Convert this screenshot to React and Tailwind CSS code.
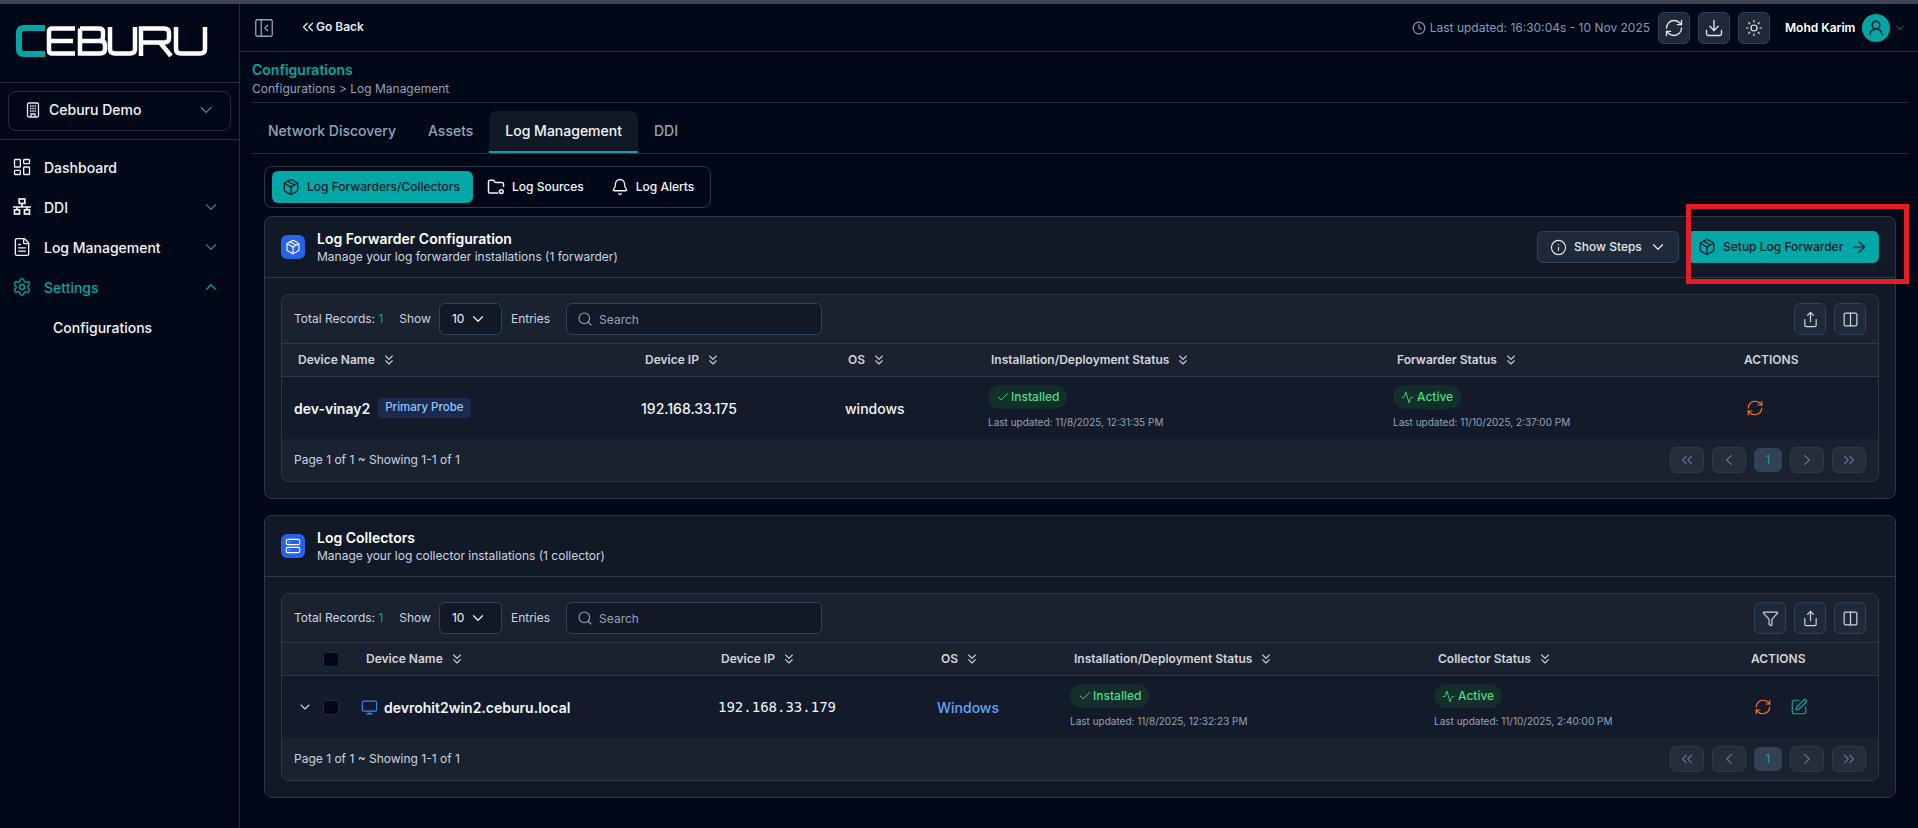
import {
  Activity, ArrowRight, Bell, Check, ChevronDown, ChevronLeft, ChevronRight, ChevronUp, ChevronsDown, ChevronsLeft,
  ChevronsRight, Clock, Columns2, FileText, Filter, Info, LayoutDashboard, Monitor, Package,
  PanelLeftClose, RefreshCw, Search, Server, Settings, Share, SquarePen, Sun, UserRound, Download,
} from 'lucide-react';

function Logo() {
  return (
    <svg width="192" height="32" viewBox="0 0 192 32" fill="none" strokeWidth="4.500">
      <path d="M29 3H8Q3 3 3 8V24Q3 29 8 29H29" stroke="#06a5a3" strokeWidth="6" />
      <g stroke="#fff">
        <path d="M59 3.500H36Q33 3.500 33 7V25Q33 28.500 36 28.500H59M33 16H57" />
        <path d="M64 3.500V28.500H84Q89 28.500 89 24V20Q89 16 84 16H66M64 3.500H83Q87 3.500 87 7V12Q87 16 83 16" />
        <path d="M94 2V24Q94 28.500 99 28.500H114Q119 28.500 119 24V2" />
        <path d="M125 31V3.500H148Q153 3.500 153 8V13Q153 17.500 148 17.500H127M144 17.500L155 31" />
        <path d="M160 2V24Q160 28.500 165 28.500H184Q189 28.500 189 24V2" />
      </g>
    </svg>
  );
}

function BuildingIcon() {
  return (
    <svg width="14" height="16" viewBox="0 0 14 16" fill="none" stroke="#e2e8f0">
      <rect x="1.500" y="1" width="11" height="14" rx="1.500" strokeWidth="1.300" />
      <path d="M4 4h1.500M6.300 4h1.500M8.600 4h1.500M4 6.500h1.500M6.300 6.500h1.500M8.600 6.500h1.500M4 9h1.500M6.300 9h1.500M8.600 9h1.500" strokeWidth="1.300" />
      <path d="M5 15v-3h4v3" strokeWidth="1.300" />
    </svg>
  );
}

function DdiIcon({ size = 20 }) {
  return (
    <svg width={size} height={size} viewBox="0 0 20 20" fill="none" stroke="currentColor" strokeWidth="1.700">
      <rect x="7.200" y="2" width="5.600" height="4.400" />
      <path d="M10 6.400V10M1 10h18M5 10v2.500M15 10v2.500" />
      <rect x="2.500" y="12.800" width="5" height="4.200" />
      <rect x="12.500" y="12.800" width="5" height="4.200" />
    </svg>
  );
}

function FolderDotIcon({ size = 18 }) {
  return (
    <svg width={size} height={size} viewBox="0 0 24 24" fill="none" stroke="currentColor" strokeWidth="2" strokeLinecap="round" strokeLinejoin="round">
      <path d="M14 20H4a2 2 0 0 1-2-2V5a2 2 0 0 1 2-2h3.900a2 2 0 0 1 1.690.900l.810 1.200a2 2 0 0 0 1.670.900H20a2 2 0 0 1 2 2v3" />
      <circle cx="19" cy="18" r="2.500" />
    </svg>
  );
}

function NavItem({ icon: Icon, label, chevron, active }) {
  return (
    <div className={`flex items-center h-10 pl-[12px] pr-[19px] ${active ? 'text-[#06a5a3]' : 'text-[#f1f5f9]'}`}>
      <Icon size={20} strokeWidth={1.6} />
      <span className="ml-[12px] text-[14px] font-medium flex-1">{label}</span>
      {chevron === 'down' && <ChevronDown size={18} strokeWidth={1.5} className="text-[#64748b]" />}
      {chevron === 'up' && <ChevronUp size={18} strokeWidth={1.5} className="text-[#06a5a3]" />}
    </div>
  );
}

function Sidebar() {
  return (
    <aside className="w-[240px] shrink-0 border-r border-[#262d3a] flex flex-col">
      <div className="h-[79px] flex items-center pl-[16px] pb-[5px] border-b border-[#262d3a] shrink-0">
        <Logo />
      </div>
      <div className="h-[57px] px-[8px] pt-[8px] border-b border-[#262d3a] shrink-0">
        <div className="h-[40px] border border-[#262d3a] rounded-lg flex items-center pl-[17px] pr-[14px] pb-[3px]">
          <BuildingIcon />
          <span className="ml-[9px] text-[14px] font-medium text-[#f1f5f9] flex-1">Ceburu Demo</span>
          <ChevronDown size={20} strokeWidth={1.5} className="text-[#64748b]" />
        </div>
      </div>
      <nav className="pt-[7px]">
        <NavItem icon={LayoutDashboard} label="Dashboard" />
        <NavItem icon={DdiIcon} label="DDI" chevron="down" />
        <NavItem icon={FileText} label="Log Management" chevron="down" />
        <NavItem icon={Settings} label="Settings" chevron="up" active />
        <div className="h-10 flex items-center pl-[53px] text-[14px] font-medium text-[#f1f5f9]">Configurations</div>
      </nav>
    </aside>
  );
}

function HeaderButton({ icon: Icon, size }) {
  return (
    <div className="w-[32px] h-[32px] rounded-md bg-[#1f2937] border border-[#334155] flex items-center justify-center text-[#e2e8f0]">
      <Icon size={size} strokeWidth={1.6} />
    </div>
  );
}

function TopBar() {
  return (
    <header className="h-[48px] border-b border-[#262d3a] flex items-center pl-[13px] pr-[12px] shrink-0">
      <PanelLeftClose size={22} strokeWidth={1.4} className="text-[#94a3b8]" />
      <div className="ml-[24px] flex items-center gap-[0px] text-[#e2e8f0] mb-[2px]">
        <ChevronsLeft size={18} strokeWidth={1.6} />
        <span className="text-[12px] font-semibold -ml-[1px]">Go Back</span>
      </div>
      <div className="ml-auto flex items-center text-[12px] text-[#8699b5]">
        <Clock size={14} />
        <span className="ml-[4px]">Last updated: 16:30:04s - 10 Nov 2025</span>
      </div>
      <div className="ml-[8px] flex gap-[8px]">
        <HeaderButton icon={RefreshCw} size={20} />
        <HeaderButton icon={Download} size={20} />
        <HeaderButton icon={Sun} size={18} />
      </div>
      <span className="ml-[15px] w-[69px] whitespace-nowrap text-[12px] font-semibold text-white">Mohd Karim</span>
      <div className="ml-[8px] w-[28px] h-[28px] rounded-full bg-[#06a5a3] flex items-center justify-center text-[#0f172a]">
        <UserRound size={18} strokeWidth={1.8} />
      </div>
      <ChevronDown size={12} className="ml-[4px] text-[#64748b]" />
    </header>
  );
}

function SortHead({ label, className = '' }) {
  return (
    <div className={`flex items-center gap-[6px] text-[12px] font-semibold text-[#d1d5db] ${className}`}>
      {label}
      <ChevronsDown size={16} strokeWidth={1.6} className="text-[#cbd5e1]" />
    </div>
  );
}

function StatusCell({ label, updated, kind }) {
  return (
    <div className="flex flex-col items-start pb-[2px]">
      {kind === 'check' ? (
        <span className="h-[24px] rounded-full bg-[#142e2c] text-[#4ade80] text-[12px] font-medium flex items-center gap-[1px] px-[8px]">
          <Check size={14} strokeWidth={1.6} />
          {label}
        </span>
      ) : (
        <span className="h-[24px] rounded-full bg-[#142e2c] text-[#4ade80] text-[12px] font-medium flex items-center gap-[3px] px-[8px]">
          <Activity size={13} strokeWidth={1.6} />
          {label}
        </span>
      )}
      <span className="mt-[7px] text-[10px] text-[#94a3b8] leading-[13px]">Last updated: {updated}</span>
    </div>
  );
}

function ToolButton({ icon: Icon }) {
  return (
    <div className="w-[32px] h-[32px] rounded-md bg-[#1f2937] border border-[#334155] flex items-center justify-center text-[#cbd5e1]">
      <Icon size={17} strokeWidth={1.7} />
    </div>
  );
}

function PageButton({ icon: Icon }) {
  return (
    <div className="w-[34px] h-[26px] rounded-md bg-[#252c3a] border border-[#2f3846] flex items-center justify-center text-[#64748b]">
      <Icon size={18} strokeWidth={1.5} />
    </div>
  );
}

function Toolbar({ tools }) {
  return (
    <div className="h-[49px] border-b border-[#2f3846] flex items-center pl-[12px] pr-[12px] text-[12px] text-[#cbd5e1]">
      <span>Total Records: <span className="text-[#06a5a3]">1</span></span>
      <span className="ml-[16px]">Show</span>
      <div className="ml-[8px] w-[63px] h-[32px] border border-[#334155] rounded-md bg-[#111927] flex items-center pl-[12px] text-[#f1f5f9]">
        10
        <ChevronDown size={18} strokeWidth={1.6} className="ml-[5px]" />
      </div>
      <span className="ml-[9px]">Entries</span>
      <div className="ml-[16px] w-[256px] h-[32px] border border-[#334155] rounded-md bg-[#111927] flex items-center pl-[10px] text-[#94a3b8]">
        <Search size={16} strokeWidth={1.6} />
        <span className="ml-[6px] pt-[1px]">Search</span>
      </div>
      <div className="ml-auto flex gap-[8px]">
        {tools.map((t, i) => <ToolButton key={i} icon={t} />)}
      </div>
    </div>
  );
}

function Footer() {
  return (
    <div className="h-[42px] rounded-b-lg flex items-center justify-between pl-[12px] pr-[12px] text-[12px] text-[#cbd5e1]">
      <span>Page 1 of 1 ~ Showing 1-1 of 1</span>
      <div className="flex items-center gap-[8px]">
        <PageButton icon={ChevronsLeft} />
        <PageButton icon={ChevronLeft} />
        <div className="w-[28px] h-[24px] rounded-md bg-[#334155] flex items-center justify-center text-[#06a5a3]">1</div>
        <PageButton icon={ChevronRight} />
        <PageButton icon={ChevronsRight} />
      </div>
    </div>
  );
}

function CardHeader({ icon: Icon, title, note, children }) {
  return (
    <div className="h-[61px] border-b border-[#2f3846] flex items-center pl-[16px] pr-[16px]">
      <div className="w-[24px] h-[24px] rounded-md bg-[#2563eb] flex items-center justify-center text-white">
        <Icon size={16} strokeWidth={1.7} />
      </div>
      <div className="ml-[12px]">
        <div className="text-[14px] font-semibold text-white leading-[18px]">{title}</div>
        <div className="text-[12px] text-[#cbd5e1] leading-[16px] mt-[1px]">{note}</div>
      </div>
      <div className="ml-auto flex items-center gap-[8px]">{children}</div>
    </div>
  );
}

function ForwarderCard() {
  return (
    <section className="h-[283px] bg-[#111927] border border-[#2f3846] rounded-lg">
      <CardHeader icon={Package} title="Log Forwarder Configuration" note="Manage your log forwarder installations (1 forwarder)">
        <div className="w-[142px] h-[32px] rounded-md bg-[#1f2937] border border-[#334155] flex items-center pl-[12px] text-[#e2e8f0]">
          <Info size={17} strokeWidth={1.6} />
          <span className="ml-[7px] text-[12px] font-medium">Show Steps</span>
          <ChevronDown size={18} strokeWidth={1.6} className="ml-[7px]" />
        </div>
        <div className="w-[192px] h-[32px] rounded-md bg-[#03a8a6] flex items-center pl-[11px] text-[#0f172a]">
          <Package size={18} strokeWidth={1.7} />
          <span className="ml-[7px] text-[12px] font-medium">Setup Log Forwarder</span>
          <ArrowRight size={18} strokeWidth={1.6} className="ml-[7px]" />
        </div>
      </CardHeader>
      <div className="mx-[16px] mt-[16px] h-[188px] bg-[#1a212f] border border-[#2f3846] rounded-lg">
        <Toolbar tools={[Share, Columns2]} />
        <div className="h-[33px] border-b border-[#2f3846] grid grid-cols-[347px_204px_143px_405px_351px_1fr] items-center pl-[12px]">
          <SortHead label="Device Name" className="pl-[4px]" />
          <SortHead label="Device IP" className="pl-[4px]" />
          <SortHead label="OS" className="pl-[3px]" />
          <SortHead label="Installation/Deployment Status" className="pl-[3px]" />
          <SortHead label="Forwarder Status" className="pl-[4px]" />
          <div className="text-[12px] font-semibold text-[#d1d5db]">ACTIONS</div>
        </div>
        <div className="h-[62px] bg-[#131b2a] grid grid-cols-[347px_204px_143px_405px_351px_1fr] items-center pl-[12px]">
          <div className="flex items-center gap-[8px]">
            <span className="text-[14px] font-semibold text-[#f1f5f9]">dev-vinay2</span>
            <span className="h-[20px] px-[7px] rounded bg-[#1b2a4c] text-[#93c5fd] text-[11.500px] font-medium flex items-center">Primary Probe</span>
          </div>
          <span className="text-[14px] font-medium text-[#f1f5f9]">192.168.33.175</span>
          <span className="text-[14px] font-medium text-[#f1f5f9]">windows</span>
          <StatusCell label="Installed" updated="11/8/2025, 12:31:35 PM" kind="check" />
          <StatusCell label="Active" updated="11/10/2025, 2:37:00 PM" kind="activity" />
          <RefreshCw size={18} strokeWidth={1.6} className="ml-[2px] text-[#f97316]" />
        </div>
        <Footer />
      </div>
    </section>
  );
}

function CollectorCard() {
  return (
    <section className="mt-[16px] h-[283px] bg-[#111927] border border-[#2f3846] rounded-lg">
      <CardHeader icon={Server} title="Log Collectors" note="Manage your log collector installations (1 collector)" />
      <div className="mx-[16px] mt-[16px] h-[188px] bg-[#1a212f] border border-[#2f3846] rounded-lg">
        <Toolbar tools={[Filter, Share, Columns2]} />
        <div className="h-[33px] border-b border-[#2f3846] grid grid-cols-[41px_43px_355px_220px_133px_364px_313px_1fr] items-center">
          <div />
          <div className="w-[16px] h-[15px] rounded-[3px] bg-[#020617] border border-[#1f2937]" />
          <SortHead label="Device Name" />
          <SortHead label="Device IP" />
          <SortHead label="OS" />
          <SortHead label="Installation/Deployment Status" />
          <SortHead label="Collector Status" />
          <div className="text-[12px] font-semibold text-[#d1d5db]">ACTIONS</div>
        </div>
        <div className="h-[62px] bg-[#131b2a] grid grid-cols-[41px_39px_356px_219px_133px_364px_317px_1fr] items-center">
          <ChevronDown size={16} strokeWidth={1.6} className="ml-[15px] text-[#cbd5e1]" />
          <div className="w-[16px] h-[15px] rounded-[3px] bg-[#020617] border border-[#1f2937]" />
          <div className="flex items-center gap-[6px] -ml-[1px]">
            <Monitor size={17} strokeWidth={1.7} className="text-[#3b82f6]" />
            <span className="text-[14px] font-semibold text-[#f1f5f9]">devrohit2win2.ceburu.local</span>
          </div>
          <span className="text-[14px] font-['DejaVu_Sans_Mono',monospace] text-[#f1f5f9]">192.168.33.179</span>
          <span className="text-[14px] font-medium text-[#60a5fa]">Windows</span>
          <StatusCell label="Installed" updated="11/8/2025, 12:32:23 PM" kind="check" />
          <StatusCell label="Active" updated="11/10/2025, 2:40:00 PM" kind="activity" />
          <div className="flex items-center gap-[18px] ml-[3px]">
            <RefreshCw size={18} strokeWidth={1.6} className="text-[#f97316]" />
            <SquarePen size={18} strokeWidth={1.6} className="text-[#06a5a3]" />
          </div>
        </div>
        <Footer />
      </div>
    </section>
  );
}

function Tabs() {
  return (
    <div className="h-[51px] border-b border-[#262d3a] pt-[8px] flex text-[14px] font-medium text-[#94a3b8]">
      <div className="px-[16px] h-[42px] pb-[4px] flex items-center">Network Discovery</div>
      <div className="px-[16px] h-[42px] pb-[4px] flex items-center">Assets</div>
      <div className="px-[16px] h-[42px] pb-[2px] flex items-center bg-[#111927] text-[#f1f5f9] border-b-2 border-[#03a8a6] rounded-t-lg">Log Management</div>
      <div className="px-[16px] h-[42px] pb-[4px] flex items-center">DDI</div>
    </div>
  );
}

function SubTabs() {
  return (
    <div className="mt-[12px] w-[447px] h-[42px] border border-[#2f3846] rounded-lg flex items-center pl-[7px] text-[12px] font-medium text-[#f1f5f9]">
      <div className="w-[201px] h-[32px] rounded-md bg-[#03a8a6] text-[#0f172a] flex items-center pl-[10px]">
        <Package size={18} strokeWidth={1.7} />
        <span className="ml-[7px]">Log Forwarders/Collectors</span>
      </div>
      <span className="ml-[14px]"><FolderDotIcon /></span>
      <span className="ml-[7px]">Log Sources</span>
      <Bell size={18} strokeWidth={1.7} className="ml-[27px]" />
      <span className="ml-[7px]">Log Alerts</span>
    </div>
  );
}

export default function App() {
  return (
    <div className="relative w-[1918px] h-[828px] overflow-hidden bg-[#010817] font-['Inter',sans-serif]">
      <div className="h-[4px] bg-[#3d4452]" />
      <div className="flex h-[824px]">
        <Sidebar />
        <main className="flex-1 flex flex-col">
          <TopBar />
          <div className="pl-[12px] pr-[10px]">
            <div className="h-[51px] border-b border-[#262d3a] pt-[8px]">
              <div className="text-[14px] font-semibold text-[#06a5a3] leading-[20px]">Configurations</div>
              <div className="text-[12px] text-[#94a3b8] leading-[16px] mt-[1px]">Configurations &gt; Log Management</div>
            </div>
            <Tabs />
            <div className="pl-[12px] pr-[12px]">
              <SubTabs />
              <div className="mt-[8px]">
                <ForwarderCard />
                <CollectorCard />
              </div>
            </div>
          </div>
        </main>
      </div>
      {/* red annotation box drawn over the screenshot */}
      <div className="absolute left-[1686px] top-[204px] w-[223px] h-[80px] border-[5px] border-[#e81c24]" />
    </div>
  );
}
